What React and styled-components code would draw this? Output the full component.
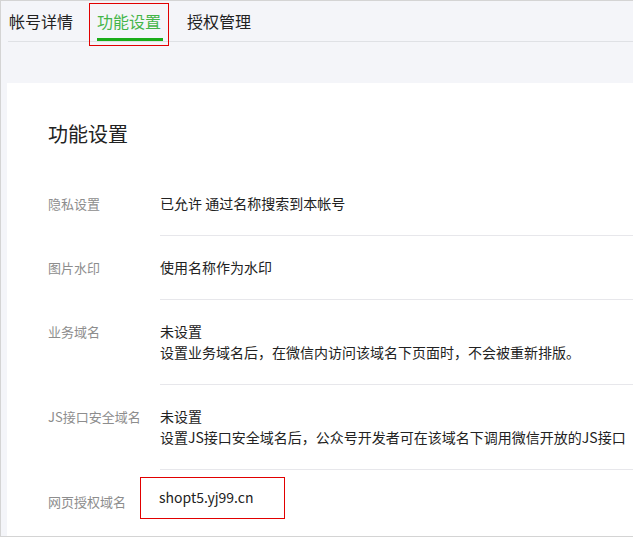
import React from 'react'
import styled, { createGlobalStyle } from 'styled-components'

const Global = createGlobalStyle`
  html, body { margin: 0; padding: 0; }
  body { font-family: "Microsoft YaHei", "Noto Sans CJK SC", sans-serif; background: #fff; }
`

const Page = styled.div`
  width: 633px;
  height: 537px;
  box-sizing: border-box;
  border: 1px solid #d4d4d4;
  border-right: none;
  background: #f4f5f9;
  overflow: hidden;
`

const Tabs = styled.div`
  display: flex;
  margin: 0 0 0 7px;
  border-bottom: 1px solid #dfe1e5;
  height: 40px;
`

const Tab = styled.div`
  position: relative;
  padding: 0 7px;
  margin-left: ${p => p.$gap || 0}px;
  border: 1px solid ${p => p.$boxed ? '#e10000' : 'transparent'};
  height: 43px;
  margin-top: 2px;
  box-sizing: border-box;
  padding-top: 5px;
  font-size: 16px;
  color: ${p => p.$active ? '#44b549' : '#222'};
  &:first-child { padding-left: 0; padding-right: 15px; }
  ${p => p.$active && `
    &::after {
      content: '';
      position: absolute;
      left: 7px; right: 5px; bottom: 4px;
      height: 3px;
      background: #1aad19;
    }
  `}
`

const Card = styled.div`
  margin: 41px 0 0 6px;
  background: #fff;
  padding: 36px 0 0 41px;
  height: 460px;
`

const Title = styled.h2`
  margin: 0 0 24px;
  font-size: 20px;
  font-weight: normal;
  color: #222;
`

const Row = styled.div`
  display: flex;
  line-height: 21px;
`

const Label = styled.div`
  width: 112px;
  flex-shrink: 0;
  font-size: 13px;
  color: #8d8d8d;
  padding: 21px 0;
`

const Value = styled.div`
  flex: 1;
  font-size: 14px;
  color: #222;
  padding: ${p => p.$pad || '21px 0'};
  border-bottom: ${p => p.$last ? 'none' : '1px solid #e7e7eb'};
  white-space: nowrap;
`

const Boxed = styled.span`
  display: inline-block;
  margin-left: -20px;
  padding: 9px 30px 10px 18px;
  border: 1px solid #e10000;
  font-size: 14px;
`

export default function App() {
  return (
    <Page>
      <Global />
      <Tabs>
        <Tab>帐号详情</Tab>
        <Tab $active $boxed>功能设置</Tab>
        <Tab $gap={10}>授权管理</Tab>
      </Tabs>
      <Card>
        <Title>功能设置</Title>
        <Row>
          <Label>隐私设置</Label>
          <Value>已允许 通过名称搜索到本帐号</Value>
        </Row>
        <Row>
          <Label>图片水印</Label>
          <Value>使用名称作为水印</Value>
        </Row>
        <Row>
          <Label>业务域名</Label>
          <Value>未设置<br />设置业务域名后，在微信内访问该域名下页面时，不会被重新排版。</Value>
        </Row>
        <Row>
          <Label>JS接口安全域名</Label>
          <Value>未设置<br />设置JS接口安全域名后，公众号开发者可在该域名下调用微信开放的JS接口</Value>
        </Row>
        <Row>
          <Label>网页授权域名</Label>
          <Value $last $pad="7px 0"><Boxed>shopt5.yj99.cn</Boxed></Value>
        </Row>
      </Card>
    </Page>
  )
}
